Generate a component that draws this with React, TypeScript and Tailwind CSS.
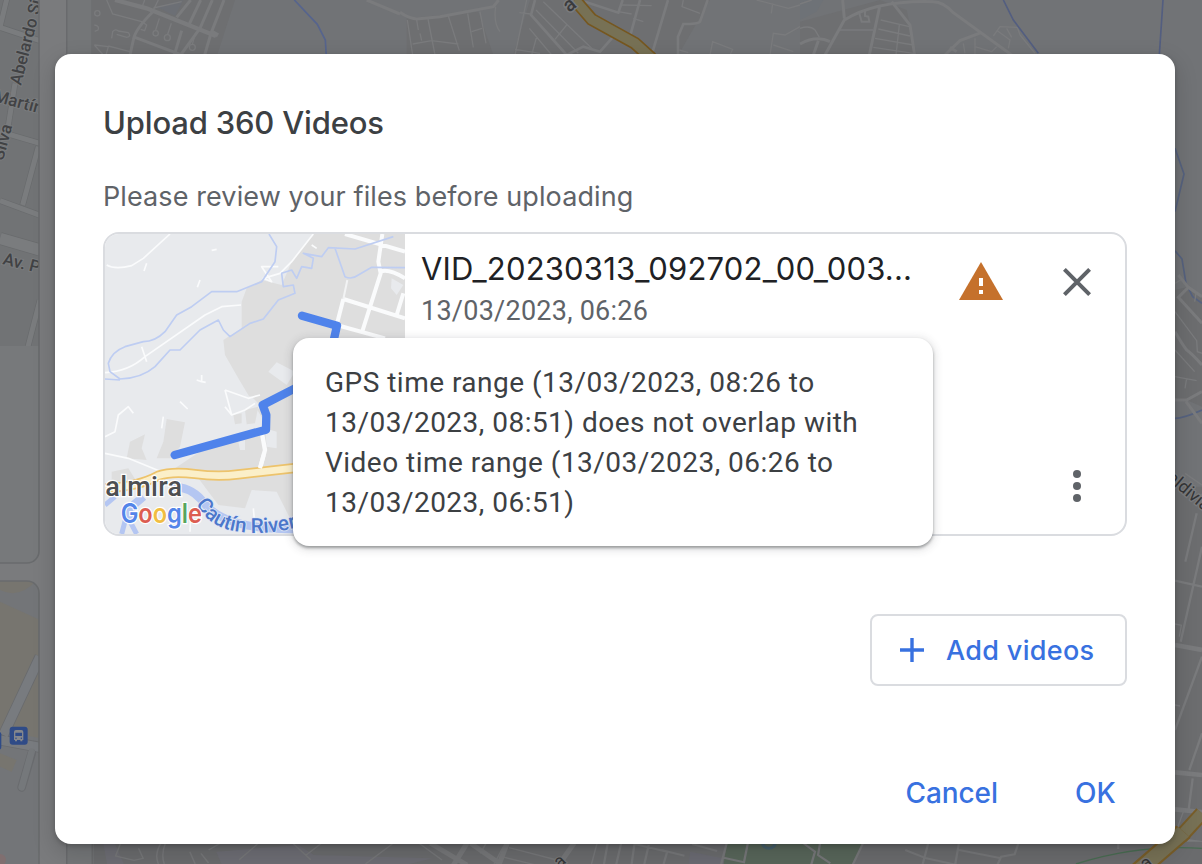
import React from 'react';

function Backdrop() {
  return (
    <svg className="absolute inset-0 h-[864px] w-[1202px]" viewBox="0 0 1202 864" aria-hidden="true">
      <defs>
        <clipPath id="sideTop"><path d="M0 -10H39V551a12 12 0 0 1-12 12H0z" /></clipPath>
        <clipPath id="sideBottom"><path d="M0 581H27a12 12 0 0 1 12 12V864H0z" /></clipPath>
        <clipPath id="mapArea"><rect x="92" y="0" width="1110" height="864" /></clipPath>
      </defs>
      <rect width="1202" height="864" fill="#7a7b7d" />
      <rect x="66" width="26" height="864" fill="#747678" />
      <rect x="92" width="1110" height="864" fill="#717376" />
      <rect x="66" width="1.5" height="864" fill="#696a6d" />
      <rect x="91.5" width="1.5" height="864" fill="#696a6c" />

      <g clipPath="url(#sideTop)">
        <rect width="39" height="346" fill="#717375" />
        <g transform="scale(.33333)" fill="none" strokeLinejoin="round">
          <g stroke="#696b6d" strokeWidth="19">
            <path d="M22-10L-2 90M0 82L120 122M45 250L22 395M0 395L120 430M115 440L68 615M0 602L120 646M120 900L84 1040" />
            <path d="M0 715L120 750" strokeWidth="38" />
          </g>
          <g stroke="#7a7c7e" strokeWidth="15">
            <path d="M22-10L-2 90M0 82L120 122M45 250L22 395M0 395L120 430M115 440L68 615M0 602L120 646M120 900L84 1040" />
            <path d="M0 715L120 750" strokeWidth="34" />
          </g>
        </g>
        <rect y="346" width="40" height="220" fill="#77797b" />
        <g fontFamily="Roboto, sans-serif" fontWeight="500" fill="#414244" stroke="#7a7c7e" strokeWidth="2" paintOrder="stroke">
          <text transform="translate(21 86) rotate(-76)" fontSize="17">Abelardo Silva</text>
          <text transform="translate(-7 101) rotate(15)" fontSize="17">Martín</text>
          <text transform="translate(3 161) rotate(-75)" fontSize="17">Silva</text>
          <text transform="translate(2 264) rotate(14)" fontSize="17">Av. Pedro</text>
        </g>
      </g>
      <path d="M39 0V551a12 12 0 0 1-12 12H0" fill="none" stroke="#696b6d" strokeWidth="1.6" />

      <g clipPath="url(#sideBottom)">
        <rect y="580" width="40" height="284" fill="#737578" />
        <g transform="translate(0 430) scale(.33333)">
          <path d="M0 515L120 570V925L0 900z" fill="#77756f" />
          <path d="M0 445H115Q60 510 0 480z" fill="#77756f" />
          <path d="M0 970L50 990L35 1025L0 1010z" fill="#77756f" />
          <path d="M120 680L10 915M0 930L120 952" fill="none" stroke="#696b6e" strokeWidth="33" />
          <path d="M120 680L10 915M0 930L120 952" fill="none" stroke="#787b7f" strokeWidth="28" />
          <path d="M95 970L65 1072" fill="none" stroke="#696b6e" strokeWidth="26" strokeLinecap="round" />
          <path d="M95 965L65 1072" fill="none" stroke="#75787b" strokeWidth="20" strokeLinecap="round" />
          <rect x="29" y="890" width="54" height="54" rx="9" fill="#2f4b87" />
          <rect x="-20" y="905" width="24" height="54" rx="8" fill="#2f4b87" />
          <path d="M42 906Q42 900 48 900H64Q70 900 70 906V930H67V934H61V930H51V934H45V930H42z" fill="#85878c" />
          <path d="M46 908H66V918H46z" fill="#2f4b87" />
          <circle cx="48" cy="925" r="2.2" fill="#2f4b87" /><circle cx="64" cy="925" r="2.2" fill="#2f4b87" />
          <circle cx="0" cy="1290" r="18" fill="#806f70" />
        </g>
      </g>
      <path d="M0 581H27a12 12 0 0 1 12 12V864" fill="none" stroke="#696b6d" strokeWidth="1.6" />

      <g clipPath="url(#mapArea)">
        <g transform="scale(.33333)" fill="none" stroke="#7a7b7d" strokeWidth="4">
          <path d="M276 0H705L650 170H276z" fill="#6e6f71" stroke="none" />
          <path d="M470 20L550 0L525 48z" fill="#6c6f75" stroke="none" />
          <path d="M320 0L338 42L425 65L440 75L434 92L422 88M434 0L426 22M475 0L458 34M460 24L545 5M478 55L467 90M514 70L503 103M587 98L577 133M335 115L338 95Q345 85 355 93L385 98Q395 110 380 112L350 103M283 135L310 165M283 135L325 140L318 165M325 138L390 155" />
          <circle cx="467" cy="100" r="8" /><circle cx="502" cy="113" r="9" /><circle cx="577" cy="142" r="9" /><circle cx="292" cy="40" r="8" /><path d="M283 75Q300 78 294 90L284 94" />
          <path d="M345 0L440 25L648 108M632 94L654 106" strokeWidth="13" />
          <path d="M458 36Q405 88 400 120L390 165M405 112L545 165M572 0L530 52M602 0L568 72M637 0L600 85L542 165M672 0L633 100L614 165M545 92L523 165" strokeWidth="9" />
          <path d="M883 0L952 73L976 120L979 170" stroke="#56648d" strokeWidth="5" />
          <path d="M1100 0L1200 42" strokeWidth="9" />
        </g>
        <g transform="translate(400 0) scale(.33333)" fill="none" stroke="#7a7b7d" strokeWidth="4">
          <path d="M20 55L235 35L280 165H20zM390 0H930L835 165H340z" fill="#6e6f71" stroke="none" />
          <path d="M0 37Q25 55 50 57L120 50L280 20L296 0" strokeWidth="9" />
          <path d="M22 60L38 165M50 60L55 90M60 100L65 122M84 57L105 165M145 48L178 152M203 40L220 142M240 35L258 130M38 132L95 122L175 132M215 95L246 85M287 20Q280 70 300 95M358 38L392 42M380 0L345 165M430 5L575 145M408 30L535 160M500 75L465 118M388 85L455 165M410 110L395 165M345 148L420 160M665 15L755 17M700 55L730 65M655 35L695 42M850 0L846 20L900 40M1070 0L1165 25L1200 15M1118 10L1114 40M1110 165L1120 100L1155 105L1200 80M1120 135L1180 155M930 165L938 125L998 148L990 165M838 150L865 158" />
          <path d="M405 0L393 45L500 165M500 165L550 140L600 155L640 110M555 5L655 38L668 0M720 0L690 110L720 125M804 0L758 155M923 0L900 65Q895 72 850 72L834 110V165" strokeWidth="8" />
          <path d="M525 0L575 58L705 130L755 175" stroke="#76571f" strokeWidth="39" />
          <path d="M525 0L575 58L705 130L755 175" stroke="#777155" strokeWidth="29" />
          <text transform="translate(508 39) rotate(-40)" fontSize="60" fontFamily="Roboto, sans-serif" fontWeight="500" fill="#3a3b3d" stroke="#7a7b7d" strokeWidth="9" paintOrder="stroke">a</text>
        </g>
        <g transform="translate(800 0) scale(.33333)" fill="none" stroke="#7a7b7d" strokeWidth="9">
          <path d="M0 65L240 0L320 30L350 165H0z" fill="#6e6f71" stroke="none" />
          <path d="M0 0H70L50 35L0 60z" fill="#6e7277" stroke="none" />
          <path d="M128 0L133 55M0 132Q50 105 90 125M75 165L133 60Q230 0 400 5Q430 5 460 38L635 165M240 15L208 165M275 5L330 75L344 165M545 97L480 122L435 165M55 122L40 165M450 142L470 155" />
          <path d="M178 40L185 65H208L205 50L195 48V30" strokeWidth="6" />
          <path d="M120 90H220M242 60L328 80M235 87L330 108M225 115L340 135M220 142L340 160M298 75L288 165M0 85Q30 75 45 90L58 112M0 12L35 0M580 108L600 80L652 82L660 105L705 160M592 92L630 120L625 145M635 112L620 85M490 130L495 160M525 115V165M525 140L575 155L590 140" strokeWidth="4" />
          <path d="M610 0L640 60L715 160M1089 0L1078 165" stroke="#535e80" strokeWidth="5" />
        </g>
        <g transform="translate(1160 0) scale(.33333)" fill="none" stroke="#7a7b7d">
          <path d="M45 870L85 860L126 890V1220L80 1200L45 1195z" fill="#6c6d6f" stroke="none" />
          <path d="M45 445L72 522L45 635M45 752L66 777L78 850L98 890L126 910M45 1255Q70 1255 126 1230" stroke="#56627f" strokeWidth="5" />
          <path d="M55 825L85 862L126 890M85 862L55 892L126 970M45 995Q65 1030 80 1050Q95 1060 126 1095M45 1200L80 1200L126 1175M78 1205L126 1270" strokeWidth="9" />
          <path d="M45 935L110 1022L112 1055L126 1060M45 1050L104 1115M45 1130L110 1142M80 1135L75 1165M45 850L62 840M108 880L104 905" strokeWidth="4" />
        </g>
        <g transform="translate(1160 430) scale(.33333)" fill="none" stroke="#7a7b7d">
          <path d="M45 170H126V1302H45z" fill="#6c6d6f" stroke="none" />
          <path d="M45 452L126 470M126 350L62 635M110 250L76 395M126 680L45 900M126 910L88 1020M98 1045L86 1140" strokeWidth="7" />
          <path d="M45 645L126 660M45 1027L126 1035M45 1138L126 1146M55 1230L126 1240" strokeWidth="14" />
          <path d="M45 582L64 586L58 620M45 825L60 828M70 1145L50 1200M75 130L126 165" strokeWidth="4" />
          <path d="M-25 1315L126 1150" stroke="#785d29" strokeWidth="46" />
          <path d="M-25 1315L126 1150" stroke="#777155" strokeWidth="34" />
          <path d="M45 1247L126 1252" stroke="#536d58" strokeWidth="4" />
          <text transform="translate(18 148) rotate(40)" fontSize="53" fontFamily="Roboto, sans-serif" fill="#343537" stroke="#7a7b7d" strokeWidth="8" paintOrder="stroke">aldivia</text>
        </g>
        <g transform="translate(0 835) scale(.3827 .33333)" fill="none" stroke="#767779" strokeWidth="4">
          <path d="M245 20H1568V90H245z" fill="#6a6b6d" stroke="none" />
          <path d="M270 25H300L325 90H280zM565 50L780 30L820 60L1130 70L1060 90H580z" fill="#6d6d74" stroke="none" />
          <path d="M315 25L302 63L350 76L374 70L362 40M420 25Q402 60 415 90M432 25Q420 60 430 90M496 50L510 87M525 55L545 84M575 25L545 45M675 25L625 74M1025 27L955 87M765 25L812 74M840 25L800 60M1095 25L1155 75M1315 35L1290 90M1310 65L1400 90M1270 25L1255 55M1330 38L1455 75M1560 25L1545 90" />
          <path d="M1125 25L1220 90M1220 25L1185 90M1230 25L1305 85L1325 25M1500 25L1460 90" strokeWidth="14" />
          <text transform="translate(1462 98) rotate(-40)" fontSize="48" fontFamily="Roboto, sans-serif" fill="#343537" stroke="#777" strokeWidth="7" paintOrder="stroke">a</text>
        </g>
        <g transform="translate(600 835) scale(.3839 .33333)" fill="none" stroke="#767779" strokeWidth="6">
          <path d="M0 20H1568V90H0z" fill="#6a6b6d" stroke="none" />
          <path d="M330 25H685L660 90H322z" fill="#58665a" stroke="none" />
          <path d="M235 50L320 70V90H230z" fill="#6b6b73" stroke="none" />
          <path d="M20 25L10 90M55 25L42 90M90 25L82 90M127 30L115 90M90 27L175 50L165 90M160 45L220 62M240 27L305 48M330 25L315 90M322 68L375 82L385 25M530 25L560 50L550 90M573 25L568 60L600 85M685 25L658 90M855 25L840 90M935 25L925 90M795 45L850 70L930 90M935 45L1045 70M1090 25L1080 58L1045 65L1035 90M1350 25V42" />
          <circle cx="440" cy="24" r="16" stroke="#46606b" strokeWidth="9" />
          <path d="M1240 87Q1400 28 1568 40" stroke="#496c52" strokeWidth="4" />
          <path d="M1405 105L1520 -10" stroke="#785d29" strokeWidth="52" />
          <path d="M1405 105L1520 -10" stroke="#777155" strokeWidth="40" />
          <text transform="translate(1420 104) rotate(-35)" fontSize="50" fontFamily="Roboto, sans-serif" fill="#333" stroke="#777" strokeWidth="8" paintOrder="stroke">a</text>
        </g>
      </g>
    </svg>
  );
}

function RouteThumbnail() {
  return (
    <svg className="h-[300px] w-[300px] shrink-0" viewBox="30 27 900 900" fill="none" role="img" aria-label="Route map">
      <defs><path id="riverLabel" d="M302 838Q350 912 430 920Q520 934 640 898" /></defs>
      <rect x="30" y="27" width="900" height="900" fill="#e8eaed" />
      <g fill="#dedede">
        <path d="M655 27H930V500L595 900L545 800L470 795L450 850L370 840L310 760L240 730L330 670L520 610L460 510L430 460L390 390L385 345L440 310V230L455 190L500 165L560 180L590 110z" />
        <path d="M215 582L270 592L255 665L225 700H185L205 650zM105 650L150 628L140 670L155 705L95 700zM50 740L100 730L125 770H50z" />
      </g>
      <g fill="#e8eaed">
        <path d="M545 412L600 440L575 480L520 440zM890 160L925 180L905 210L888 190zM510 610L545 620V670L515 665zM430 650L450 645V675H435zM390 500L470 515L500 545L460 570L410 560z" />
      </g>
      <path d="M415 570L440 565V595L420 598zM450 555L490 545L480 595L455 598z" fill="#dedede" />
      <g stroke="#fafbfc" strokeWidth="6" strokeLinejoin="round">
        <path d="M225 27L145 100L110 122Q60 135 35 120M438 240L380 245L330 270L150 395Q100 440 30 443M655 27L590 110L555 145L505 160L530 170L500 125H550M365 73L350 76M155 115L147 138M315 165L307 187M140 365L155 410M320 450V470L305 465M320 470L332 472M30 635L60 620L70 570L100 545L115 565M390 495L410 570L390 545M390 495L460 520L495 510M410 570L450 555L480 535M30 685L100 700L210 745M255 530L278 552M205 575L200 610M475 850L482 927M287 870L285 920M650 60L665 70" strokeWidth="5" />
        <path d="M500 620L510 675L495 730" strokeWidth="13" />
        <path d="M750 27L930 80M862 27L850 110L857 145L800 325M857 140Q880 130 930 160M745 222L930 280M745 222L725 300L870 340M925 205L905 270" strokeWidth="12" />
        <path d="M757 165L745 222" strokeWidth="6" stroke="#f2f3f4" />
      </g>
      <g stroke="#becdf2" strokeWidth="5" strokeLinejoin="round">
        <path d="M522 27L545 65L540 110L500 170L425 200L350 200L290 245L245 270L210 320Q180 350 145 350L90 365Q50 380 40 415L45 440L75 462Q140 460 180 425L225 375H255L315 315L370 285L385 315L405 335L465 295L505 282L550 225L600 205L595 180L565 185L560 145L590 135L605 160L620 125L650 130L655 100L625 85L680 95L700 68L780 72L895 35M720 70L750 155Q770 165 790 150L830 127L930 128M30 462L75 465" />
      </g>
      <path d="M100 880L110 845L145 815M230 785Q285 785 320 825Q380 915 600 912" stroke="#b4c6f2" strokeWidth="25" />
      <path d="M80 927L95 870L125 927M30 840L60 815" stroke="#b4c6f2" strokeWidth="15" />
      <path d="M30 790Q130 785 190 752Q230 738 300 747T430 748L610 728" stroke="#edc36b" strokeWidth="31" />
      <path d="M30 790Q130 785 190 752Q230 738 300 747T430 748L610 728" stroke="#fbefc9" strokeWidth="20" />
      <path d="M495 730L506 690" stroke="#fafbfc" strokeWidth="12" />
      <path d="M621 272L726 302L714 355M610 485L503 540L514 570L513 614L239 690" stroke="#4f83eb" strokeWidth="25" strokeLinecap="round" strokeLinejoin="round" />
      <text x="31" y="812" fontFamily="Roboto, sans-serif" fontSize="81" fontWeight="500" fill="#4d4f52" stroke="#fff" strokeWidth="7" paintOrder="stroke" textLength="230">almira</text>
      <text fontFamily="Roboto, sans-serif" fontSize="62" fontWeight="500" fill="#4c77cb" stroke="#dfe6f6" strokeWidth="5" paintOrder="stroke"><textPath href="#riverLabel">Cautín River</textPath></text>
      <text x="77" y="895" fontFamily="Inter, sans-serif" fontSize="80" fontWeight="600" textLength="244" lengthAdjust="spacingAndGlyphs" stroke="#fff" strokeWidth="7" paintOrder="stroke">
        <tspan fill="#5385e9">G</tspan><tspan fill="#dc5d52">o</tspan><tspan fill="#f1bd42">o</tspan><tspan fill="#5385e9">g</tspan><tspan fill="#58a55c">l</tspan><tspan fill="#dc5d52">e</tspan>
      </text>
    </svg>
  );
}

export default function App() {
  return (
    <main className="relative h-[864px] w-[1202px] overflow-hidden pl-[55px] pt-[54px] font-['Inter',sans-serif]">
      <Backdrop />
      <section role="dialog" className="relative flex h-[790px] w-[1120px] flex-col rounded-2xl bg-white px-12 pt-12 shadow-[0_8px_22px_2px_rgba(0,0,0,0.14),0_2px_5px_rgba(0,0,0,0.2)]">
        <h1 className="h-[66px] whitespace-nowrap text-[31px] font-medium leading-[42px] tracking-[-0.18px] text-[#3c4043]">Upload 360 Videos</h1>
        <p className="h-16 whitespace-nowrap text-[27px] leading-[58px] tracking-[0.1px] text-[#5f6368]">Please review your files before uploading</p>
        <article className="relative flex h-[304px] w-[1024px] rounded-2xl border-2 border-[#dadce0]">
          <div className="h-[300px] shrink-0 overflow-hidden rounded-l-[14px]"><RouteThumbnail /></div>
          <div className="w-[520px] shrink-0 pl-4 pt-[15px]">
            <h2 className="whitespace-nowrap text-[31px] leading-[40px] tracking-[0.2px] text-[#202124]">VID_20230313_092702_00_003...</h2>
            <p className="whitespace-nowrap pt-px font-['Roboto',sans-serif] text-[27px] leading-[43px] tracking-[0.25px] text-[#5f6368]">13/03/2023, 06:26</p>
          </div>
          <div className="flex flex-1 items-start pl-[34px] pt-7">
            <svg className="h-[38px] w-[44px]" viewBox="0 0 44 38"><path d="M0 38L22 0L44 38z" fill="#c5712c" /><path d="M20 16h4v8h-4zM20 28h4v4h-4z" fill="#fff" /></svg>
          </div>
          <div className="flex w-24 shrink-0 flex-col items-center justify-between pb-8 pt-[34px]">
            <button aria-label="Remove video"><svg className="h-7 w-7" viewBox="0 0 28 28"><path d="M1.4 1.4L26.6 26.6M26.6 1.4L1.4 26.6" stroke="#5f6368" strokeWidth="4" /></svg></button>
            <button aria-label="More options"><svg className="h-8 w-2" viewBox="0 0 8 32" fill="#5f6368"><circle cx="4" cy="4" r="4" /><circle cx="4" cy="16" r="4" /><circle cx="4" cy="28" r="4" /></svg></button>
          </div>
          <div role="tooltip" className="absolute left-[188px] top-[104px] h-[208px] w-[640px] rounded-2xl bg-white px-8 pt-[25px] font-['Roboto',sans-serif] text-[28px] leading-10 tracking-[0.48px] text-[#3c4043] shadow-[0_2px_3px_rgba(60,64,67,0.45),0_2px_9px_2px_rgba(60,64,67,0.16)]">
            <p className="whitespace-nowrap">GPS time range (13/03/2023, 08:26 to</p>
            <p className="whitespace-nowrap">13/03/2023, 08:51) does not overlap with</p>
            <p className="whitespace-nowrap">Video time range (13/03/2023, 06:26 to</p>
            <p className="whitespace-nowrap">13/03/2023, 06:51)</p>
          </div>
        </article>
        <button className="mt-[78px] flex h-[72px] w-[257px] shrink-0 items-center self-end whitespace-nowrap rounded-lg border-2 border-[#dadce0] pl-7 text-[27px] font-medium tracking-[0.32px] text-[#3871e0]">
          <svg className="mr-[22px] h-6 w-6 shrink-0" viewBox="0 0 24 24"><path d="M0 12H24M12 0V24" stroke="#3871e0" strokeWidth="3.4" /></svg>
          <span className="pt-0.5">Add videos</span>
        </button>
        <footer className="mt-[87px] flex h-10 items-center justify-end gap-[77px] pr-[11px] text-[28px] font-medium text-[#3871e0]">
          <button className="tracking-[-0.1px]">Cancel</button>
          <button className="tracking-[0.2px]">OK</button>
        </footer>
      </section>
    </main>
  );
}
